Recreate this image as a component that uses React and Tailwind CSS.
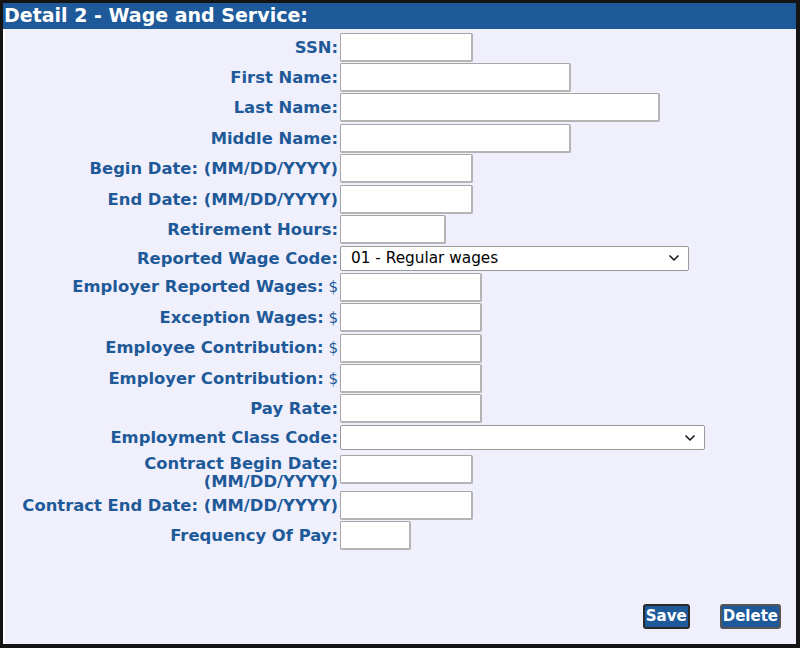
import React from 'react';

const fields = [
  { label: 'SSN:', w: 'w-[133px]' },
  { label: 'First Name:', w: 'w-[231px]' },
  { label: 'Last Name:', w: 'w-[320px]' },
  { label: 'Middle Name:', w: 'w-[231px]' },
  { label: 'Begin Date: (MM/DD/YYYY)', w: 'w-[133px]' },
  { label: 'End Date: (MM/DD/YYYY)', w: 'w-[133px]' },
  { label: 'Retirement Hours:', w: 'w-[106px]' },
  { label: 'Reported Wage Code:', select: '01 - Regular wages', w: 'w-[349px]' },
  { label: 'Employer Reported Wages:', money: true, w: 'w-[142px]' },
  { label: 'Exception Wages:', money: true, w: 'w-[142px]' },
  { label: 'Employee Contribution:', money: true, w: 'w-[142px]' },
  { label: 'Employer Contribution:', money: true, w: 'w-[142px]' },
  { label: 'Pay Rate:', w: 'w-[142px]' },
  { label: 'Employment Class Code:', select: '', w: 'w-[365px]' },
  { label: 'Contract Begin Date:', label2: '(MM/DD/YYYY)', w: 'w-[133px]' },
  { label: 'Contract End Date: (MM/DD/YYYY)', w: 'w-[133px]' },
  { label: 'Frequency Of Pay:', w: 'w-[71px]' },
];

const Chevron = () => (
  <svg width="12" height="8" viewBox="0 0 12 8" className="shrink-0">
    <path d="M1.5 1.5 L6 6 L10.5 1.5" fill="none" stroke="#111" strokeWidth="1.5" />
  </svg>
);

const TextBox = ({ w, className = '' }) => (
  <div className={`${w} h-[29px] shrink-0 bg-white border border-[#a6a6a6] border-r-2 border-b-2 border-r-[#b4b4b4] border-b-[#b4b4b4] rounded-[2px] ${className}`} />
);

const FieldRow = ({ f }) => {
  // two-line label: label sits a bit lower than the box
  if (f.label2) {
    return (
      <div className="flex items-start h-[38.5px]">
        <div className="w-[333px] shrink-0 pt-[3px] text-right text-[16.4px] leading-[18px] text-[#1f5a98] font-bold whitespace-nowrap">
          <div>{f.label}</div>
          <div>{f.label2}</div>
        </div>
        <div className="w-[2px] shrink-0" />
        <TextBox w={f.w} className="mt-[3px]" />
      </div>
    );
  }

  const rowH = f.select !== undefined ? 'h-[27.5px]' : 'h-[30.4px]';
  return (
    <div className={`flex items-center ${rowH}`}>
      <div className="w-[333px] shrink-0 text-right text-[16.4px] leading-[17px] text-[#1f5a98] whitespace-nowrap">
        <span className="font-bold">{f.label}</span>
        {f.money && <span className="font-normal text-[15px]"> $</span>}
      </div>
      <div className="w-[2px] shrink-0" />
      {f.select !== undefined ? (
        <div className={`${f.w} h-[25px] bg-white border border-[#9a9a9a] rounded-[2px] flex items-center justify-between pl-[10px] pr-[8px]`}>
          <span className="text-[15.3px] text-black">{f.select}</span>
          <Chevron />
        </div>
      ) : (
        <TextBox w={f.w} />
      )}
    </div>
  );
};

export default function App() {
  return (
    <div className="w-[800px] h-[648px] bg-[#141414] pl-[3px] pt-[3px] pr-[4px] pb-[4px] font-['DejaVu_Sans',Verdana,sans-serif]">
      <div className="h-full flex flex-col bg-[#f0f0fd]">
        <div className="h-[26px] bg-[#1e5a9a] text-white font-bold text-[19px] leading-[25px] pl-[1px]">
          Detail 2 - Wage and Service:
        </div>
        <div className="flex-1 flex flex-col border-l-2 border-white pt-[3px]">
          {fields.map((f, i) => (
            <FieldRow key={i} f={f} />
          ))}
          <div className="flex-1" />
          <div className="flex justify-end gap-[30px] pr-[15px] pb-[15px]">
            <button className="h-[25px] px-[1px] bg-[#1e5a9a] text-white font-bold text-[15px] leading-[21px] border-2 border-[#2a2a2a] rounded-[3px]">
              Save
            </button>
            <button className="h-[25px] px-[1px] bg-[#1e5a9a] text-white font-bold text-[15px] leading-[21px] border-2 border-[#555] rounded-[3px]">
              Delete
            </button>
          </div>
        </div>
      </div>
    </div>
  );
}
